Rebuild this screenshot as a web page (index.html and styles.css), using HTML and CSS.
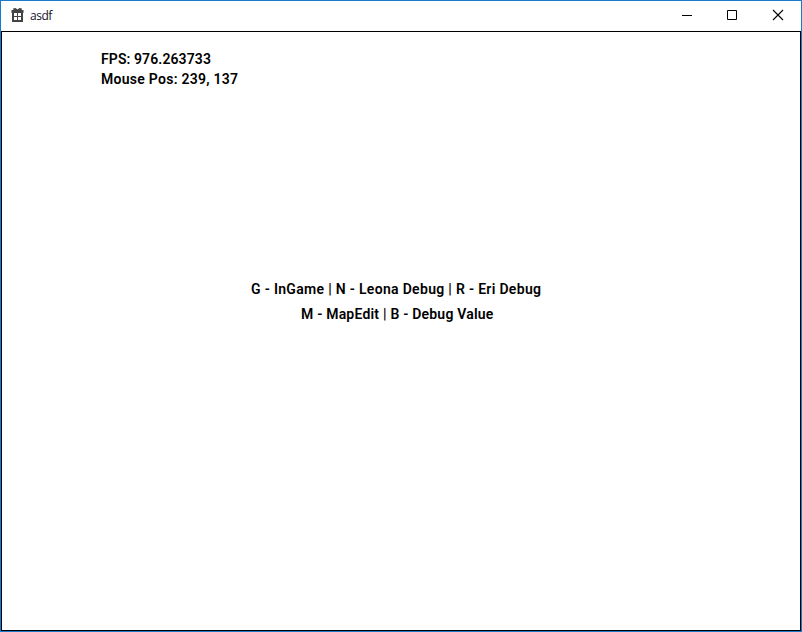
FILE: index.html
```html
<!DOCTYPE html>
<html lang="en">
<head>
<meta charset="utf-8">
<title>asdf</title>
<link rel="stylesheet" href="styles.css">
</head>
<body>
<div class="window">
  <header class="titlebar">
    <svg class="app-icon" width="13" height="14" viewBox="0 0 13 14">
      <path fill="#444" d="M2 .5L4.500 0l2 1.500 2-1.500L11 .5 10.500 2H12.500v3H12v9H1V5H.5V2h2z"/>
      <path fill="#fff" d="M3 5h3v3H3zM7 5h3v3H7zM3 9h3v3H3zM7 9h3v3H7z"/>
    </svg>
    <span class="title">asdf</span>
    <div class="controls">
      <svg width="46" height="30" viewBox="0 0 46 30"><path d="M11 14.500h10" stroke="#000"/></svg>
      <svg width="46" height="30" viewBox="0 0 46 30"><path d="M10.500 9.500h9v9h-9z" fill="none" stroke="#000"/></svg>
      <svg width="38" height="30" viewBox="0 0 38 30"><path d="M10 9l10 10M20 9L10 19" stroke="#000" stroke-width="1.1"/></svg>
    </div>
  </header>
  <main class="client">
    <div class="stats">
      <p><span class="fps">FPS: 976.263733</span></p>
      <p><span class="mouse">Mouse Pos: 239, 137</span></p>
    </div>
    <div class="menu">
      <p><span class="modes">G - InGame | N - Leona Debug | R - Eri Debug</span></p>
      <p class="second"><span class="tools">M - MapEdit | B - Debug Value</span></p>
    </div>
  </main>
</div>
</body>
</html>
```
FILE: styles.css
```css
* { box-sizing: border-box; }
body { margin: 0; background: #fff; }
p { margin: 0; }
.window {
  width: 802px;
  height: 632px;
  border: 1px solid #1979ca;
  display: flex;
  flex-direction: column;
  overflow: hidden;
}
.titlebar {
  height: 30px;
  flex: none;
  display: flex;
  align-items: center;
  padding-left: 10px;
}
.app-icon { display: block; margin-top: -2px; }
.title {
  margin-left: 6px;
  font: 12px/28px "Open Sans", sans-serif;
  letter-spacing: -0.5px;
  color: #14142c;
}
.controls { display: flex; margin-left: auto; }
.controls svg { display: block; }
.client {
  flex: 1;
  border: 1px solid #000;
  color: #000;
  font: 600 14px/20px Roboto, sans-serif;
  white-space: nowrap;
}
.stats { padding: 17px 0 0 99px; }
.menu { padding: 188px 0 0 249px; line-height: 25px; }
.second { padding-left: 50px; }
.fps { letter-spacing: 0.1px; }
.mouse { letter-spacing: 0.27px; }
.modes { letter-spacing: 0.31px; }
.tools { letter-spacing: 0.21px; }
```
